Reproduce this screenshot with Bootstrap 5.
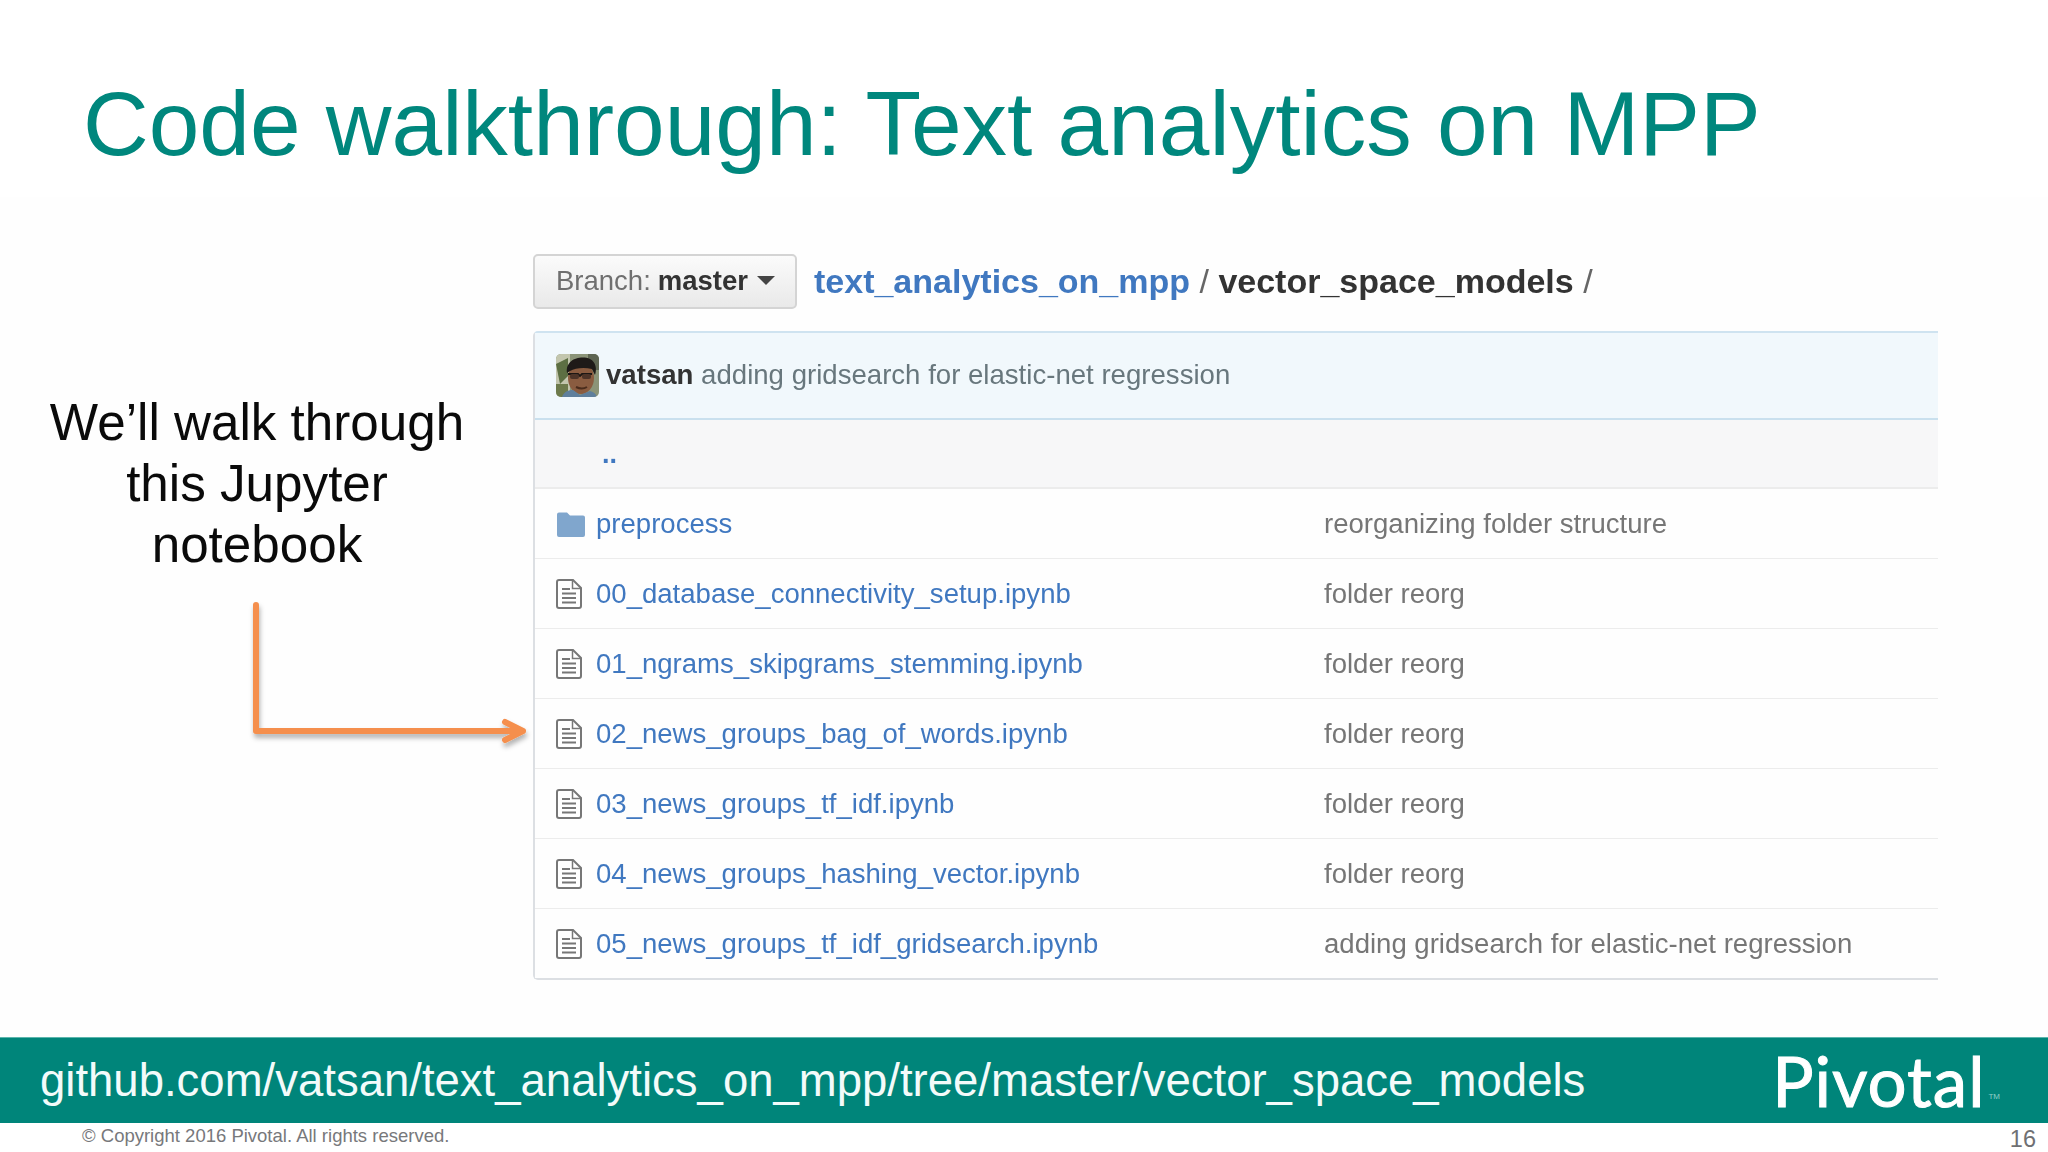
<!DOCTYPE html>
<html lang="en">
<head>
<meta charset="utf-8">
<title>Code walkthrough</title>
<link href="https://cdn.jsdelivr.net/npm/bootstrap@5.3.0/dist/css/bootstrap.min.css" rel="stylesheet">
<style>
html,body{margin:0;background:#fff;}
.slide-page{position:relative;width:2048px;height:1152px;overflow:hidden;font-family:"Liberation Sans",Arial,sans-serif;background:#fff;}
.slide-title{margin:0;padding:71px 0 0 83px;height:197px;font-size:91px;line-height:106px;font-weight:400;color:#00877d;font-family:"Liberation Sans",Arial,sans-serif;}
.slide-body{height:840px;padding:57px 110px 0 0;background:#fefefe;}
.callout-col{width:533px;flex:none;}
.callout-text{margin:138px 0 0 42px;width:430px;text-align:center;font-size:51.2px;line-height:61px;color:#0a0a0a;}
.repo-pane{flex:1 1 auto;min-width:0;filter:blur(.35px);}
.crumb-row{height:55px;margin-bottom:22px;gap:17px;}
.branch-btn{width:264px;height:55px;padding:0 0 2px 21px;display:flex;align-items:center;font-size:27.5px;color:#6f6f6f;background:linear-gradient(#fbfbfb,#e9e9e9);border:2px solid #d4d4d4;border-radius:5px;}
.branch-btn b{color:#333;margin-left:7px;}
.caret-down{width:0;height:0;margin-left:9px;border-left:9px solid transparent;border-right:9px solid transparent;border-top:9px solid #444;}
.crumb-path{font-size:34px;line-height:50px;margin-bottom:2px;font-weight:700;color:#333;}
.crumb-path a{color:#4078c0;text-decoration:none;}
.crumb-sep{font-weight:400;color:#666;}
.file-box{border-left:2px solid #dcdfe3;border-bottom:2px solid #dcdfe3;border-top:2px solid #cfe3f0;border-top-left-radius:5px;border-bottom-left-radius:5px;}
.commit-row{height:87px;padding-left:21px;background:#f1f8fc;border-bottom:2px solid #c9e0ee;font-size:27.6px;color:#68777d;gap:7px;}
.commit-row b{color:#333;}
.commit-line{line-height:30px;margin-bottom:2px;}
.up-row{height:69px;padding:2px 0 0 67px;background:#f7f7f8;border-bottom:2px solid #ececec;color:#4078c0;font-weight:700;font-size:27px;}
.file-row{height:70px;padding:0 0 0 21px;border:0;border-bottom:2px solid #ececec;border-radius:0;background:#fefefe;font-size:27.55px;}
.file-row:last-child{height:69px;border-bottom:2px solid #d8d8d8;}
.file-name{width:738px;flex:none;color:#4078c0;padding-left:10px;text-decoration:none;}
.file-ico{width:30px;flex:none;display:block;}
.file-msg{color:#767676;}
.url-bar{height:86px;background:#00857a;border-top:1px solid #5cb5ac;padding:0 48px 0 40px;color:#fff;}
.url-text{font-size:45.5px;line-height:85px;color:#f3fbfa;}
.logo-mark{font-family:Lato,"Open Sans",sans-serif;font-size:69px;line-height:84px;font-weight:400;letter-spacing:1px;color:#fff;-webkit-text-stroke:1px #fff;}
.logo-tm{font-size:8px;align-self:flex-end;margin:0 0 20px 3px;color:#8fcfc8;}
.legal-row{height:29px;padding:0 12px 0 82px;color:#77787b;}
.legal-text{font-size:18.5px;line-height:24px;margin-top:1px;}
.page-num{font-size:23.5px;line-height:24px;margin-top:4px;color:#6f7073;}
.arrow-overlay{position:absolute;left:240px;top:590px;width:300px;height:170px;}
</style>
</head>
<body>
<div class="slide-page d-flex flex-column">
  <h1 class="slide-title">Code walkthrough: Text analytics on MPP</h1>
  <div class="slide-body d-flex">
    <aside class="callout-col">
      <p class="callout-text">We’ll walk through this Jupyter notebook</p>
    </aside>
    <section class="repo-pane">
      <div class="crumb-row d-flex align-items-center">
        <div class="branch-btn">Branch:<b>master</b><span class="caret-down"></span></div>
        <div class="crumb-path"><a href="#">text_analytics_on_mpp</a><span class="crumb-sep"> / </span>vector_space_models<span class="crumb-sep"> /</span></div>
      </div>
      <div class="file-box">
        <div class="commit-row d-flex align-items-center">
          <svg width="43" height="43" viewBox="0 0 43 43" class="d-block"><defs><clipPath id="av"><rect width="43" height="43" rx="5"/></clipPath></defs><g clip-path="url(#av)"><rect width="43" height="43" fill="#8b9478"/><rect width="14" height="43" fill="#c3c6ae"/><path d="M0 10L12 4V22L4 30Z" fill="#5d6f43"/><rect x="0" y="30" width="12" height="13" fill="#6d7a4c"/><rect x="32" width="11" height="16" fill="#5e6552"/><ellipse cx="25" cy="24" rx="13" ry="16" fill="#8a5c40"/><path d="M11 19C9 5 25 1 34 5C40 8 41 15 39 21L36 15C28 13 19 14 14 17Z" fill="#1e1a18"/><path d="M12 20H22L24 22L26 20H36" fill="none" stroke="#1c1714" stroke-width="1.800"/><rect x="14" y="20" width="9" height="5" rx="2" fill="#4d3428"/><rect x="26" y="20" width="9" height="5" rx="2" fill="#4d3428"/><path d="M20 33q6 3 11 0" stroke="#4a2c1c" stroke-width="2" fill="none"/><path d="M6 43C8 37 13 36 17 36L24 41L34 37C38 38 40 40 41 43Z" fill="#5f7f9c"/></g></svg>
          <span class="commit-line"><b>vatsan</b> adding gridsearch for elastic-net regression</span>
        </div>
        <div class="up-row d-flex align-items-center">..</div>
        <div class="list-group list-group-flush">
          <div class="list-group-item file-row d-flex align-items-center">
            <svg class="file-ico" width="30" height="26" viewBox="0 0 30 26"><path d="M1 3.500A2 2 0 0 1 3 1.500h8l3 3h13a2 2 0 0 1 2 2V24a2 2 0 0 1-2 2H3a2 2 0 0 1-2-2Z" fill="#80a6cd"/></svg>
            <a class="file-name" href="#">preprocess</a><span class="file-msg">reorganizing folder structure</span>
          </div>
          <div class="list-group-item file-row d-flex align-items-center">
            <svg class="file-ico" width="30" height="30" viewBox="0 0 30 30"><use href="#docico"/></svg>
            <a class="file-name" href="#">00_database_connectivity_setup.ipynb</a><span class="file-msg">folder reorg</span>
          </div>
          <div class="list-group-item file-row d-flex align-items-center">
            <svg class="file-ico" width="30" height="30" viewBox="0 0 30 30"><use href="#docico"/></svg>
            <a class="file-name" href="#">01_ngrams_skipgrams_stemming.ipynb</a><span class="file-msg">folder reorg</span>
          </div>
          <div class="list-group-item file-row d-flex align-items-center">
            <svg class="file-ico" width="30" height="30" viewBox="0 0 30 30"><use href="#docico"/></svg>
            <a class="file-name" href="#">02_news_groups_bag_of_words.ipynb</a><span class="file-msg">folder reorg</span>
          </div>
          <div class="list-group-item file-row d-flex align-items-center">
            <svg class="file-ico" width="30" height="30" viewBox="0 0 30 30"><use href="#docico"/></svg>
            <a class="file-name" href="#">03_news_groups_tf_idf.ipynb</a><span class="file-msg">folder reorg</span>
          </div>
          <div class="list-group-item file-row d-flex align-items-center">
            <svg class="file-ico" width="30" height="30" viewBox="0 0 30 30"><use href="#docico"/></svg>
            <a class="file-name" href="#">04_news_groups_hashing_vector.ipynb</a><span class="file-msg">folder reorg</span>
          </div>
          <div class="list-group-item file-row d-flex align-items-center">
            <svg class="file-ico" width="30" height="30" viewBox="0 0 30 30"><use href="#docico"/></svg>
            <a class="file-name" href="#">05_news_groups_tf_idf_gridsearch.ipynb</a><span class="file-msg">adding gridsearch for elastic-net regression</span>
          </div>
        </div>
      </div>
    </section>
  </div>
  <footer class="url-bar d-flex align-items-center justify-content-between">
    <span class="url-text">github.com/vatsan/text_analytics_on_mpp/tree/master/vector_space_models</span>
    <span class="d-flex"><span class="logo-mark">Pivotal</span><span class="logo-tm">TM</span></span>
  </footer>
  <div class="legal-row d-flex justify-content-between">
    <span class="legal-text">© Copyright 2016 Pivotal. All rights reserved.</span>
    <span class="page-num">16</span>
  </div>
  <svg class="arrow-overlay" viewBox="0 0 300 170">
    <defs>
      <symbol id="docico" viewBox="0 0 30 30"><path d="M1 3a2 2 0 0 1 2-2h14l8 8v18a2 2 0 0 1-2 2H3a2 2 0 0 1-2-2Z" fill="#fff" stroke="#777" stroke-width="2"/><path d="M16.500 1.500V9.500H24.500" fill="none" stroke="#777" stroke-width="1.500"/><path d="M6 10h8M6 14.500h14M6 19h14M6 23.500h14" stroke="#777" stroke-width="2"/></symbol>
      <filter id="softdrop" x="-10%" y="-10%" width="130%" height="130%"><feDropShadow dx="1" dy="4" stdDeviation="2.500" flood-color="#000" flood-opacity=".3"/></filter>
    </defs>
    <path d="M16 15V141H283M265 132L283 141L265 150" fill="none" stroke="#f58f4d" stroke-width="6" stroke-linecap="round" stroke-linejoin="round" filter="url(#softdrop)"/>
  </svg>
</div>
<script src="https://cdn.jsdelivr.net/npm/bootstrap@5.3.0/dist/js/bootstrap.bundle.min.js"></script>
</body>
</html>
